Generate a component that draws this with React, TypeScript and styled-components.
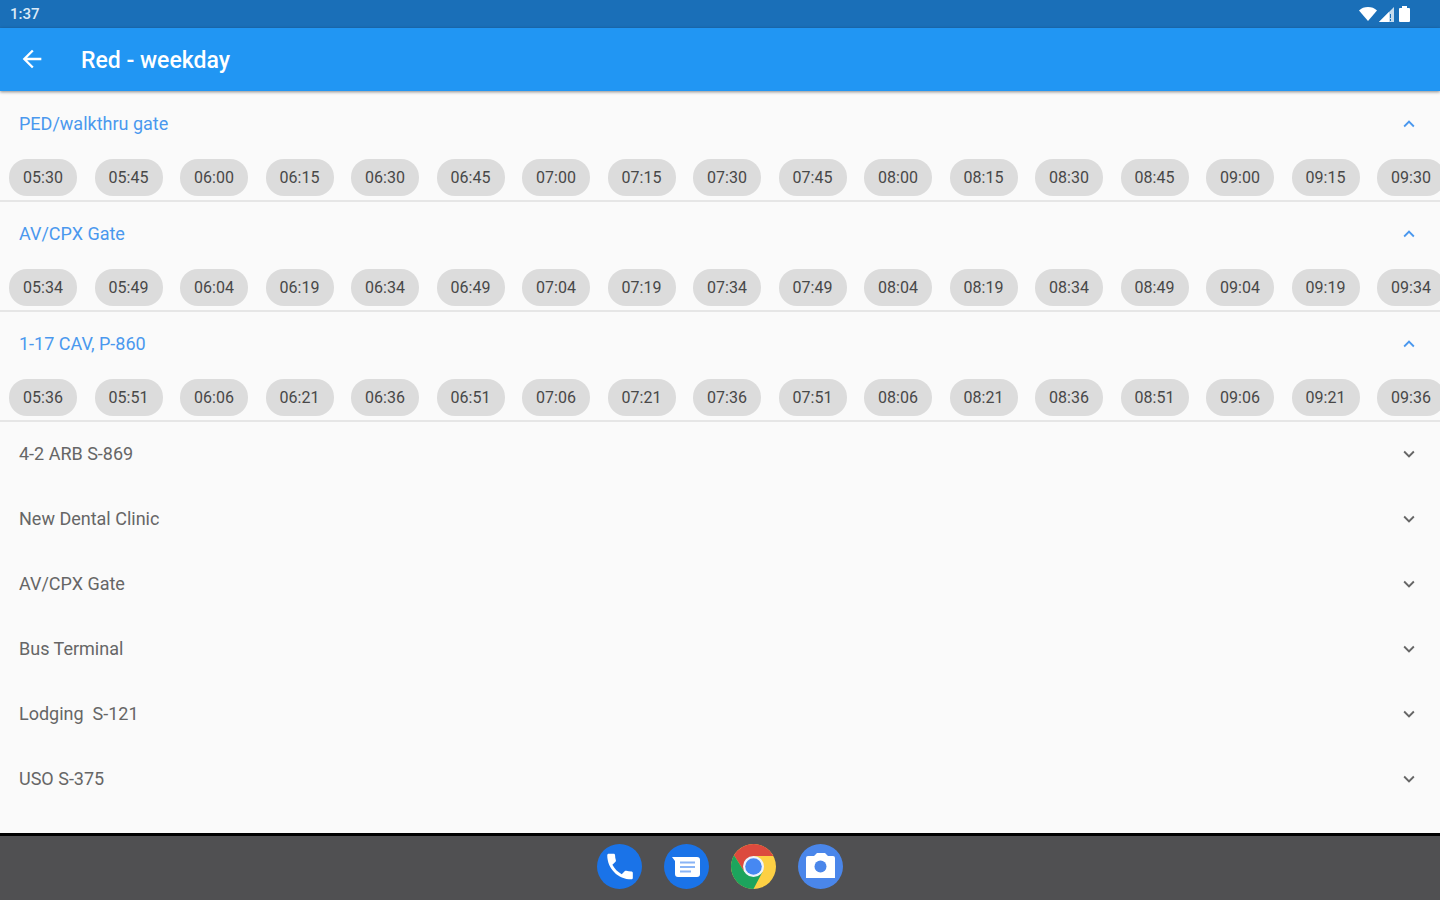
import React, { useState } from "react";
import styled, { createGlobalStyle } from "styled-components";

const GlobalStyle = createGlobalStyle`
  *, *::before, *::after { box-sizing: border-box; }
  body {
    margin: 0;
    background: #fafafa;
    font-family: Roboto, "Liberation Sans", sans-serif;
  }
`;

const Screen = styled.div`
  display: flex;
  flex-direction: column;
  min-height: 100vh;
  overflow-x: hidden;
`;

const StatusBar = styled.div`
  display: flex;
  align-items: center;
  justify-content: space-between;
  height: 28px;
  padding: 0 28px 0 10px;
  background: #1a6fb8;
  color: #dceaf7;
  font-size: 15px;
  font-weight: 500;
`;

const StatusIcons = styled.div`
  display: flex;
  align-items: center;
  gap: 2px;
`;

const AppBar = styled.header`
  position: relative;
  display: flex;
  align-items: center;
  gap: 29px;
  height: 63px;
  padding: 0 12px 1px;
  background: #2196f3;
  color: #fff;
  box-shadow: 0 1px 3px rgba(0, 0, 0, 0.45);
`;

const BackButton = styled.button`
  display: grid;
  place-items: center;
  width: 40px;
  height: 40px;
  padding: 0;
  border: 0;
  background: none;
  color: inherit;
  cursor: pointer;
`;

const Title = styled.h1`
  margin: 0;
  padding-top: 3px;
  font-size: 23px;
  font-weight: 500;
  line-height: 28px;
`;

const StopList = styled.main`
  flex: 1;
  padding-top: 1px;
`;

const Stop = styled.section<{ $open: boolean }>`
  height: ${(p) => (p.$open ? "110px" : "65px")};
  border-bottom: ${(p) => (p.$open ? "2px solid #e6e6e6" : "0")};
  overflow: hidden;
`;

const StopHeading = styled.h2`
  margin: 0;
  font-size: 18px;
  font-weight: 400;
`;

const StopToggle = styled.button<{ $open: boolean }>`
  display: flex;
  align-items: center;
  justify-content: space-between;
  width: 100%;
  height: 65px;
  padding: 0 20px 2px 19px;
  border: 0;
  background: none;
  color: ${(p) => (p.$open ? "#4a98ee" : "#666")};
  font: inherit;
  white-space: pre;
  text-align: left;
  cursor: pointer;
`;

const Times = styled.ul`
  display: flex;
  justify-content: space-between;
  margin: 2px -5px 0 9px;
  padding: 0;
  list-style: none;
`;

const TimeChip = styled.li`
  flex: none;
  width: 68px;
  height: 37px;
  border-radius: 18px;
  background: #dcdcdc;
  color: #484848;
  font-size: 16px;
  line-height: 38px;
  text-align: center;
`;

const Dock = styled.nav`
  display: flex;
  align-items: center;
  justify-content: center;
  gap: 22px;
  height: 67px;
  padding-bottom: 4px;
  border-top: 3px solid #000;
  background: #505052;
`;

const DockButton = styled.button`
  width: 45px;
  height: 45px;
  padding: 0;
  border: 0;
  border-radius: 50%;
  background: none;
  cursor: pointer;

  svg { display: block; }
`;

const stops = [
  { name: "PED/walkthru gate", offset: 0, open: true },
  { name: "AV/CPX Gate", offset: 4, open: true },
  { name: "1-17 CAV, P-860", offset: 6, open: true },
  { name: "4-2 ARB S-869", offset: 8, open: false },
  { name: "New Dental Clinic", offset: 9, open: false },
  { name: "AV/CPX Gate", offset: 11, open: false },
  { name: "Bus Terminal", offset: 12, open: false },
  { name: "Lodging  S-121", offset: 13, open: false },
  { name: "USO S-375", offset: 14, open: false },
];

const FIRST_DEPARTURE = 5 * 60 + 30;

function departures(offset: number): string[] {
  return Array.from({ length: 17 }, (_, i) => {
    const t = FIRST_DEPARTURE + offset + i * 15;
    const pad = (n: number) => String(n).padStart(2, "0");
    return `${pad(Math.floor(t / 60))}:${pad(t % 60)}`;
  });
}

function Chevron({ up }: { up: boolean }) {
  return (
    <svg width="22" height="22" viewBox="0 0 24 24" fill="currentColor" aria-hidden="true">
      {up ? (
        <path d="M12 8l-6 6 1.41 1.41L12 10.83l4.59 4.58L18 14z" />
      ) : (
        <path d="M16.59 8.59L12 13.17 7.41 8.59 6 10l6 6 6-6z" />
      )}
    </svg>
  );
}

function StopPanel({ name, offset, open: initial }: (typeof stops)[number]) {
  const [open, setOpen] = useState(initial);
  return (
    <Stop $open={open}>
      <StopHeading>
        <StopToggle $open={open} aria-expanded={open} onClick={() => setOpen(!open)}>
          {name}
          <Chevron up={open} />
        </StopToggle>
      </StopHeading>
      {open && (
        <Times>
          {departures(offset).map((t) => (
            <TimeChip key={t}>{t}</TimeChip>
          ))}
        </Times>
      )}
    </Stop>
  );
}

export default function App() {
  return (
    <Screen>
      <GlobalStyle />
      <StatusBar>
        <span>1:37</span>
        <StatusIcons>
          <svg width="18" height="14" viewBox="0 0 18 14" aria-hidden="true">
            <path d="M9 14L0 3.4C2.4 1.2 5.5 0 9 0s6.6 1.2 9 3.4z" fill="#fff" />
          </svg>
          <svg width="15" height="15" viewBox="0 0 15 15" aria-hidden="true">
            <path d="M0 15L15 0v15z" fill="#fff" fillOpacity="0.75" />
            <path d="M0 15L10 5v10z" fill="#fff" />
            <path d="M11 7h1v4h-1zM11 12h1v2h-1z" fill="#1a6fb8" />
          </svg>
          <svg width="16" height="16" viewBox="0 0 16 16" aria-hidden="true">
            <path d="M6 0h5v2h2a1 1 0 0 1 1 1v12a1 1 0 0 1-1 1H4a1 1 0 0 1-1-1V3a1 1 0 0 1 1-1h2z" fill="#fff" />
          </svg>
        </StatusIcons>
      </StatusBar>
      <AppBar>
        <BackButton aria-label="Back">
          <svg width="28" height="28" viewBox="0 0 24 24" fill="currentColor" aria-hidden="true">
            <path d="M20 11H7.83l5.59-5.59L12 4l-8 8 8 8 1.41-1.41L7.83 13H20z" />
          </svg>
        </BackButton>
        <Title>Red - weekday</Title>
      </AppBar>
      <StopList>
        {stops.map((s, i) => (
          <StopPanel key={i} {...s} />
        ))}
      </StopList>
      <Dock aria-label="Apps">
        <DockButton aria-label="Phone">
          <svg width="45" height="45" viewBox="0 0 45 45" aria-hidden="true">
            <circle cx="22.5" cy="22.5" r="22.5" fill="#1a73e8" />
            <g transform="translate(6 5.5) scale(1.42)">
              <path
                d="M6.62 10.79c1.44 2.83 3.76 5.14 6.59 6.59l2.2-2.2c.27-.27.67-.36 1.02-.24 1.12.37 2.33.57 3.57.57.55 0 1 .45 1 1V20c0 .55-.45 1-1 1-9.39 0-17-7.61-17-17 0-.55.45-1 1-1h3.5c.55 0 1 .45 1 1 0 1.25.2 2.45.57 3.57.11.35.03.74-.25 1.02z"
                fill="#fff"
              />
            </g>
          </svg>
        </DockButton>
        <DockButton aria-label="Messages">
          <svg width="45" height="45" viewBox="0 0 45 45" aria-hidden="true">
            <circle cx="22.5" cy="22.5" r="22.5" fill="#1a73e8" />
            <path d="M8 13h25a3 3 0 0 1 3 3v14a3 3 0 0 1-3 3H14a3 3 0 0 1-3-3V17z" fill="#fff" />
            <path d="M16 18.5h15M16 23h15M16 27.5h11" stroke="#8ab4f5" strokeWidth="2" fill="none" />
          </svg>
        </DockButton>
        <DockButton aria-label="Chrome">
          <svg width="45" height="45" viewBox="0 0 45 45" aria-hidden="true">
            <circle cx="22.5" cy="22.5" r="22.5" fill="#fdd044" />
            <path d="M22.5 12H42.4A22.5 22.5 0 0 0 3 11.3L13.4 27.7z" fill="#dc4a3e" />
            <path d="M3 11.3A22.5 22.5 0 0 0 22.5 45L31.6 27.7 22.5 32 13.4 27.7z" fill="#1da45d" />
            <circle cx="22.5" cy="22.5" r="10.5" fill="#eef3fb" />
            <circle cx="22.5" cy="22.5" r="8.3" fill="#4688f2" />
          </svg>
        </DockButton>
        <DockButton aria-label="Camera">
          <svg width="45" height="45" viewBox="0 0 45 45" aria-hidden="true">
            <circle cx="22.5" cy="22.5" r="22.5" fill="#4a86ea" />
            <path d="M10 12h6l3-3h8l3 3h5a2 2 0 0 1 2 2v20H8V14a2 2 0 0 1 2-2z" fill="#fff" />
            <circle cx="22.5" cy="22.5" r="6" fill="#4a86ea" />
          </svg>
        </DockButton>
      </Dock>
    </Screen>
  );
}
